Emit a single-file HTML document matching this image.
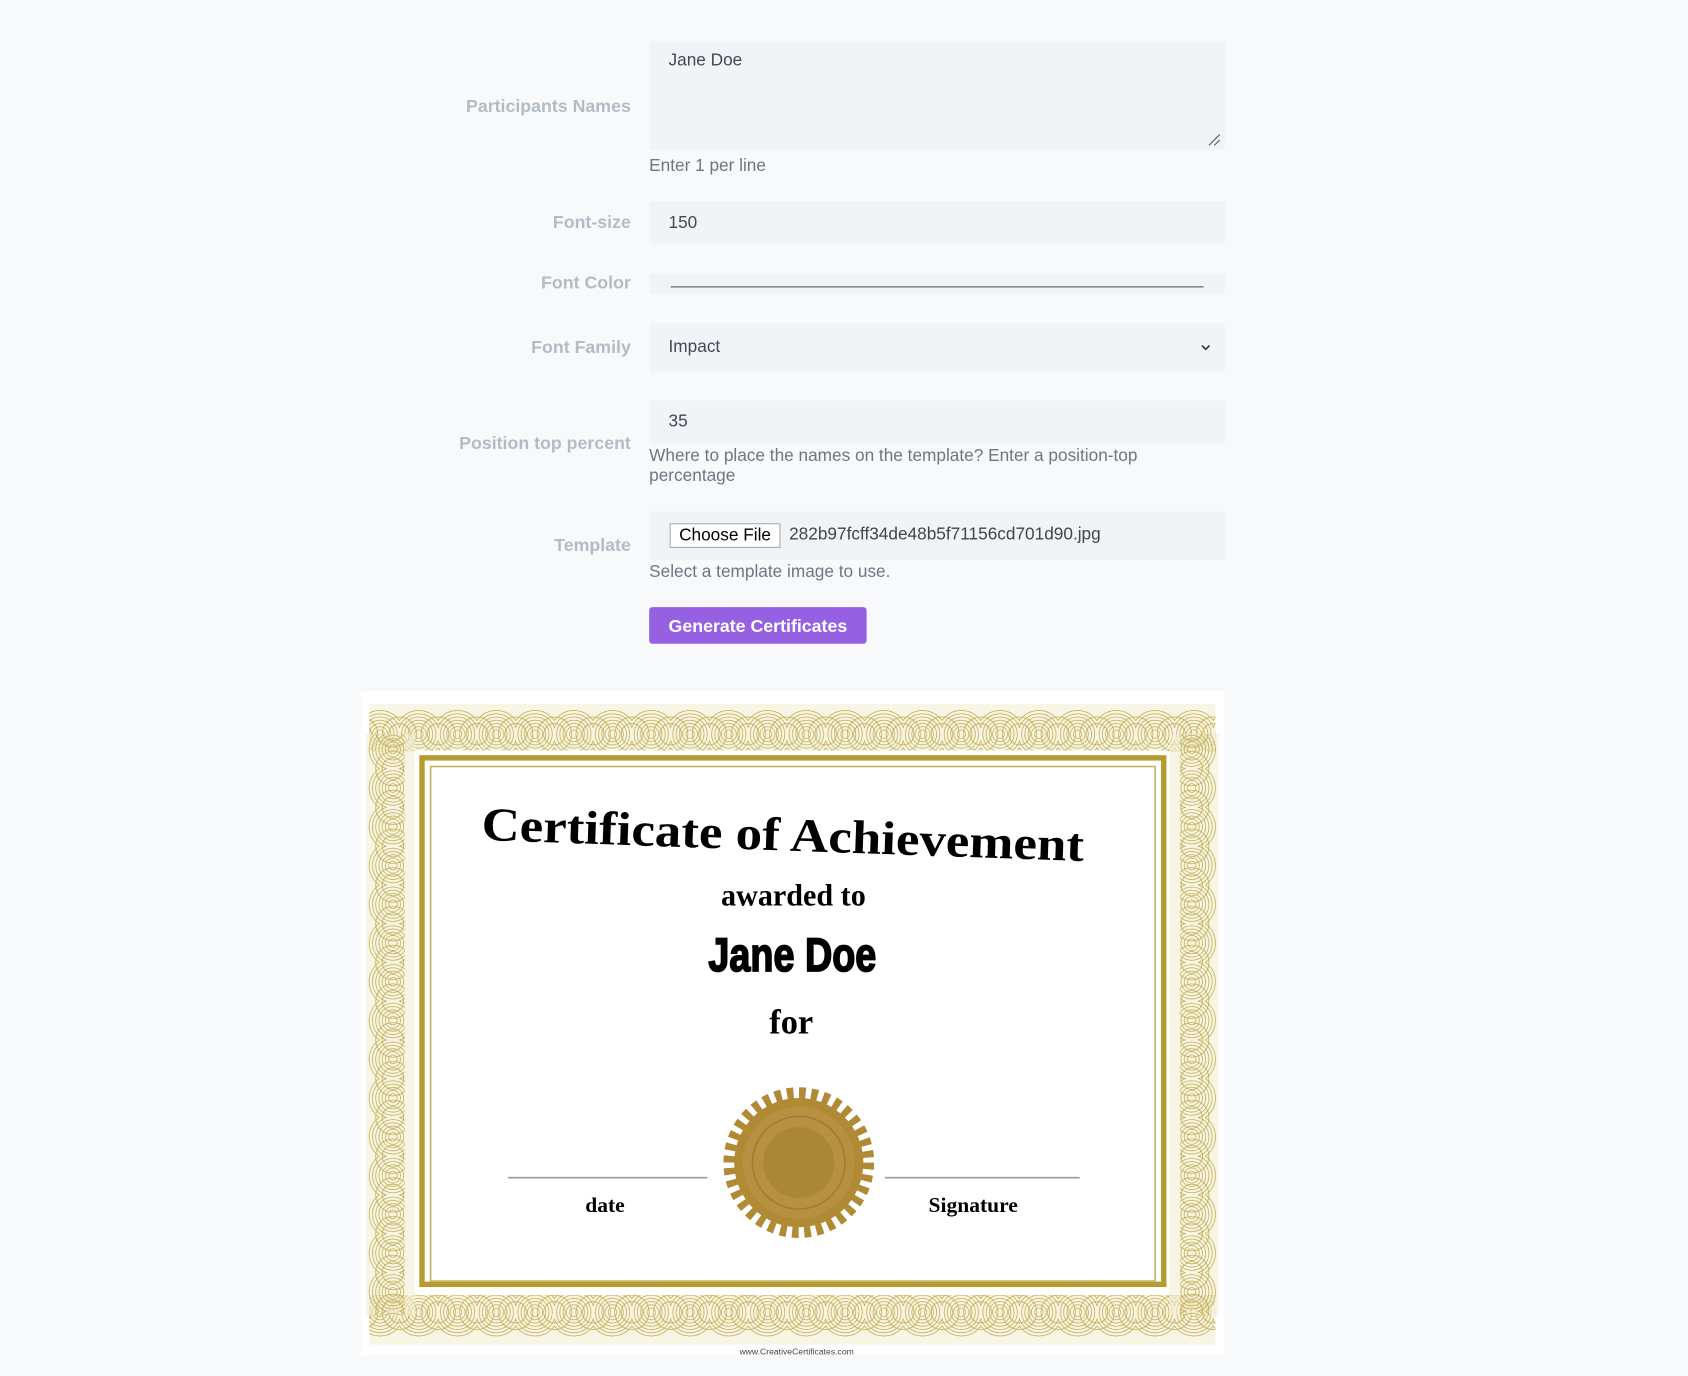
<!DOCTYPE html>
<html><head><meta charset="utf-8"><style>
html,body{margin:0;padding:0;background:#f7f9fb;overflow:hidden}
#w{position:absolute;left:0;top:0;width:1568px;height:1278px;transform:scale(1.07653);transform-origin:0 0;font-family:"Liberation Sans",sans-serif}
.lbl{position:absolute;right:982px;font-weight:bold;font-size:16.5px;color:#b3bcc5;text-align:right;white-space:nowrap}
.box{position:absolute;left:603px;width:535px;background:#f1f4f6;border-radius:3px}
.val{position:absolute;left:18px;font-size:16px;color:#3f4a55}
.help{position:absolute;left:603px;font-size:16px;color:#6c7782;line-height:19px}
</style></head><body><div id="w">
<div class="lbl" style="top:90px">Participants Names</div>
<div class="box" style="top:38px;height:101px"><div class="val" style="top:10px">Jane Doe</div>
<svg style="position:absolute;right:4px;bottom:3px" width="12" height="12"><path d="M1 11L11 1M6 11L11 6" stroke="#555" stroke-width="1"/></svg></div>
<div class="help" style="top:145px">Enter 1 per line</div>
<div class="lbl" style="top:198px">Font-size</div>
<div class="box" style="top:187px;height:40px"><div class="val" style="top:12px">150</div></div>
<div class="lbl" style="top:254px">Font Color</div>
<div class="box" style="top:254px;height:19px"><div style="position:absolute;left:20px;right:20px;top:12px;height:1px;background:#555"></div></div>
<div class="lbl" style="top:314px">Font Family</div>
<div class="box" style="top:300px;height:46px"><div class="val" style="top:14px">Impact</div>
<svg style="position:absolute;right:13px;top:19px" width="10" height="8"><path d="M1.5 2L5 5.5L8.5 2" stroke="#333" stroke-width="1.5" fill="none"/></svg></div>
<div class="lbl" style="top:403px">Position top percent</div>
<div class="box" style="top:372px;height:40px"><div class="val" style="top:11px">35</div></div>
<div class="help" style="top:414px">Where to place the names on the template? Enter a position-top<br>percentage</div>
<div class="lbl" style="top:498px">Template</div>
<div class="box" style="top:475px;height:45px">
<div style="position:absolute;left:19px;top:11px;width:101px;height:21px;border:1px solid #aaa;background:#fff;font-size:16px;color:#000;text-align:center;line-height:21px">Choose File</div>
<div class="val" style="left:130px;top:13px;color:#444">282b97fcff34de48b5f71156cd701d90.jpg</div></div>
<div class="help" style="top:522px">Select a template image to use.</div>
<div style="position:absolute;left:603px;top:564px;width:202px;height:34px;background:#9561e2;border-radius:3px;color:#fff;font-weight:bold;font-size:16.5px;text-align:center;line-height:36px">Generate Certificates</div>

<svg style="position:absolute;left:335px;top:642px" width="802" height="617" viewBox="0 0 802 617">
<defs>
<pattern id="pt" x="0" y="0" width="36" height="60" patternUnits="userSpaceOnUse">
<g fill="none" stroke="#bda846" stroke-width="0.7">
<circle cx="18" cy="40" r="4"/><circle cx="18" cy="40" r="7"/><circle cx="18" cy="40" r="10"/><circle cx="18" cy="40" r="13"/><circle cx="18" cy="40" r="16"/><circle cx="18" cy="40" r="19"/><circle cx="18" cy="40" r="22"/>
<circle cx="0" cy="40" r="10"/><circle cx="36" cy="40" r="10"/><circle cx="0" cy="40" r="16"/><circle cx="36" cy="40" r="16"/></g></pattern>
<pattern id="ps" x="0" y="0" width="60" height="36" patternUnits="userSpaceOnUse">
<g fill="none" stroke="#bda846" stroke-width="0.7">
<circle cy="18" cx="40" r="4"/><circle cy="18" cx="40" r="7"/><circle cy="18" cx="40" r="10"/><circle cy="18" cx="40" r="13"/><circle cy="18" cx="40" r="16"/><circle cy="18" cx="40" r="19"/><circle cy="18" cx="40" r="22"/>
<circle cy="0" cx="40" r="10"/><circle cy="36" cx="40" r="10"/><circle cy="0" cx="40" r="16"/><circle cy="36" cx="40" r="16"/></g></pattern>
</defs>
<rect width="802" height="617" fill="#fff"/>
<rect x="8" y="12" width="786" height="44" fill="#f3eed3" opacity="0.6"/>
<rect x="8" y="12" width="786" height="44" fill="url(#pt)"/>
<g transform="translate(0,617) scale(1,-1)"><rect x="8" y="10" width="786" height="46" fill="#f3eed3" opacity="0.6"/><rect x="8" y="10" width="786" height="46" fill="url(#pt)"/></g>
<rect x="5" y="40" width="46" height="540" fill="#f3eed3" opacity="0.6"/>
<rect x="5" y="40" width="46" height="540" fill="url(#ps)" transform="translate(-10,0)"/>
<g transform="translate(802,0) scale(-1,1)"><rect x="5" y="40" width="46" height="540" fill="#f3eed3" opacity="0.6"/><rect x="5" y="40" width="46" height="540" fill="url(#ps)" transform="translate(-10,0)"/></g>
<rect x="50" y="55" width="700" height="503" fill="#fff"/>
<rect x="57" y="62" width="689" height="489" fill="none" stroke="#b59c2e" stroke-width="5"/>
<rect x="65" y="70" width="673" height="478" fill="none" stroke="#c9b560" stroke-width="1.5"/>
<g font-family="'Liberation Serif',serif" fill="#000" text-anchor="middle" font-weight="bold">
<text x="392" y="148" font-size="44" transform="rotate(2 392 140)" textLength="560" lengthAdjust="spacingAndGlyphs">Certificate of Achievement</text>
<text x="402" y="199" font-size="28">awarded to</text>
<text x="400" y="318" font-size="32">for</text>
<text x="227" y="484" font-size="20">date</text>
<text x="569" y="484" font-size="20">Signature</text>
</g>
<text x="401" y="260" font-size="44" font-weight="bold" text-anchor="middle" stroke="#000" stroke-width="1.6" font-family="'Liberation Sans Narrow','Liberation Sans',sans-serif" textLength="156" lengthAdjust="spacingAndGlyphs">Jane Doe</text>
<line x1="137" y1="452" x2="322" y2="452" stroke="#999" stroke-width="1.5"/>
<line x1="487" y1="452" x2="668" y2="452" stroke="#999" stroke-width="1.5"/>
<circle cx="407" cy="438" r="63" fill="none" stroke="#b08a35" stroke-width="14" stroke-dasharray="6 5"/>
<circle cx="407" cy="438" r="60" fill="#b08a35"/>
<circle cx="407" cy="438" r="52" fill="#b79042"/>
<circle cx="407" cy="438" r="43" fill="none" stroke="#a17c32" stroke-width="1.5"/>
<circle cx="407" cy="438" r="33" fill="#aa8639"/>
<text x="405" y="616" font-size="8" fill="#444" text-anchor="middle" font-family="'Liberation Sans',sans-serif">www.CreativeCertificates.com</text>
</svg>
</div></body></html>
